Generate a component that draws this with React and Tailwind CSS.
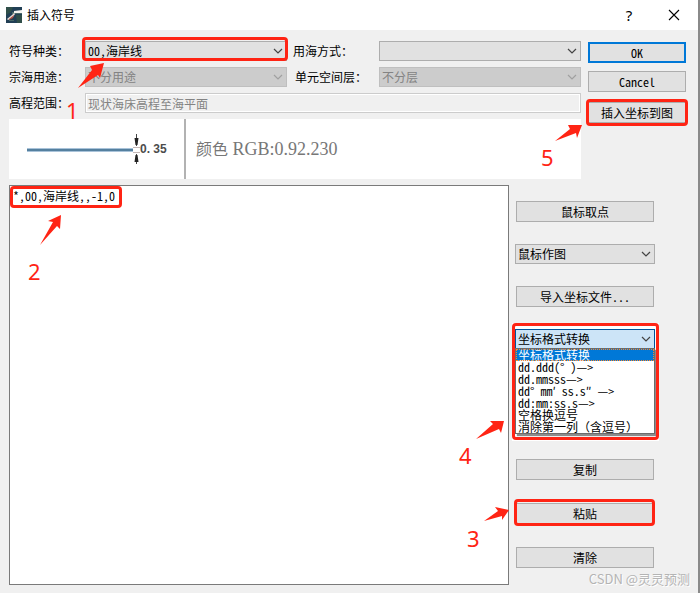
import { useState } from 'react'
import clsx from 'clsx'

const FORMATS = ['坐标格式转换','dd.ddd(° )—>','dd.mmsss—>','dd° mm′ ss.s″ —>','dd:mm:ss.s—>','空格换逗号','消除第一列（含逗号）']

// outline: tip, barb, notch, tail, notch, barb
const ARROWS = [
  '104,63 90,66 92,70 78,88 98,75 100,78',
  '61,215 48,221 53,222 40,245 57,226 60,229',
  '509,510 495,507 498,511 484,521 502,516 502,520',
  '504,421 490,421 493,424 476,439 499,429 501,433',
  '582,125 568,125 570,129 555,141 576,133 577,138',
]

function Chevron({ className }) {
  return (
    <svg className={clsx('absolute right-1 top-1.5 pointer-events-none',className)} width="10" height="8" viewBox="0 0 10 8" fill="none" stroke="currentColor" strokeWidth="1.2">
      <path d="M1 2l4 4 4-4"/>
    </svg>
  )
}

function Select({ id, label, value, options, disabled, open, onClick }) {
  return (
    <div className="relative">
      <select id={id} aria-label={label} defaultValue={value} disabled={disabled} onMouseDown={onClick}
        className={clsx('block w-full h-5 pl-0.5 pr-4 appearance-none border rounded-none opacity-100 focus:outline-none',
          disabled ? 'bg-[#cccccc] border-[#bfbfbf] text-[#838383]' : open ? 'bg-[#cce4f7] border-[#005499]' : 'bg-[#e1e1e1] border-[#adadad]')}>
        {options.map(o=><option key={o}>{o}</option>)}
      </select>
      <Chevron className={disabled ? 'text-[#a0a0a0]' : 'text-[#444444]'}/>
    </div>
  )
}

function Button({ primary, className, children, ...rest }) {
  return (
    <button type="button" {...rest}
      className={clsx('block w-full h-[21px] bg-[#e1e1e1] text-center',primary ? 'border-2 border-[#0078d7]' : 'border border-[#adadad]',className)}>
      {children}
    </button>
  )
}

function Mark({ className }) {
  return <div className={clsx('absolute border-3 border-[#ff2414] rounded-sm pointer-events-none',className)}/>
}

function Num({ className, children }) {
  return <span className={clsx('absolute text-[22px] leading-5 text-[#ff2414] pointer-events-none font-["Noto_Sans",sans-serif]',className)}>{children}</span>
}

function TitleBar() {
  return (
    <header className="h-[30px] bg-white flex items-center pl-1.5 pr-[18px]">
      <svg width="16" height="16" viewBox="0 0 16 16" className="mr-[5px]">
        <path fill="#213f55" d="M0 0h16v16H0z"/>
        <path fill="#304f49" d="M0 0h7l-2 5-5 3zM10 8h6v8h-5z"/>
        <path fill="#4a6968" d="M6 5h10v2H6zM3 13h5v1H3z"/>
        <path fill="#f4f3f0" d="M8 4l8-1v3H8z"/>
        <path fill="#e9ded8" d="M1 12l5-4 2-2 1 1-2 3-5 3z"/>
        <path fill="#ae5146" d="M3 12l5-4-1 3-4 2z"/>
      </svg>
      <h1 className="flex-1">插入符号</h1>
      <button type="button" aria-label="Help" className="w-3 mr-[33px] text-[15px] leading-4 font-['Noto_Sans',sans-serif]">?</button>
      <button type="button" aria-label="Close">
        <svg width="12" height="12" viewBox="0 0 12 12" stroke="#000" strokeWidth="1.1"><path d="M1 1l10 10M11 1L1 11"/></svg>
      </button>
    </header>
  )
}

function Preview() {
  return (
    <div className="h-[60px] mt-1.5 bg-white flex items-center">
      <svg width="131" height="60" viewBox="0 0 131 60">
        <path stroke="#a9c3d9" strokeWidth="4" d="M18 31h106"/>
        <path stroke="#55809f" strokeWidth="2" d="M18 31h106"/>
        <path stroke="#c4b8b8" d="M124 28.500h7M124 33.500h7"/>
        <path stroke="#444" d="M127.500 15v12M127.500 35v10"/>
        <path fill="#222" d="M125.500 19h4l-1 7h-2zM125.500 43h4l-1-7h-2z"/>
      </svg>
      <span className="w-11 text-xs font-bold text-[#4c4c4c] font-['Liberation_Sans',sans-serif]">0. 35</span>
      <div className="w-0.5 h-full bg-[#b2b2b2]"/>
      <span className="ml-2.5 text-lg text-[#777777] font-['Liberation_Serif','Noto_Sans_CJK_SC',serif]">
        <span className="text-base">颜色</span> RGB:0.92.230
      </span>
    </div>
  )
}

export default function App() {
  const [coords,setCoords]=useState('*,00,海岸线,,-1,0')
  const [open,setOpen]=useState(true)
  const [format,setFormat]=useState(FORMATS[0])
  return (
    <main className="relative min-h-screen flex flex-col bg-[#f0f0f0] border-r-2 border-[#8a8a8a] text-black text-xs font-['Noto_Sans_Mono_CJK_SC','Noto_Sans_CJK_SC',sans-serif]">
      <TitleBar/>
      <div className="flex gap-[7px] pl-[9px] pr-3 pt-[11px]">
        <div className="flex-1">
          <div className="grid grid-cols-[76px_1fr_92px_1fr] gap-y-1.5 items-center">
            <label htmlFor="kind">符号种类：</label>
            <div className="relative">
              <Select id="kind" value="00,海岸线" options={['00,海岸线']}/>
              <Mark className="-left-[3px] -right-px -top-1 bottom-0"/>
            </div>
            <label htmlFor="sea" className="pl-1.5">用海方式：</label>
            <Select id="sea" options={['']}/>
            <label htmlFor="use">宗海用途：</label>
            <Select id="use" value="不分用途" options={['不分用途']} disabled/>
            <label htmlFor="layer" className="pl-2">单元空间层：</label>
            <Select id="layer" value="不分层" options={['不分层']} disabled/>
            <label htmlFor="range">高程范围：</label>
            <input id="range" readOnly value="现状海床高程至海平面"
              className="col-span-3 h-5 px-0.5 border border-[#cccccc] bg-[#f0f0f0] text-[#838383] shadow-[inset_0_0_0_1px_white] focus:outline-none"/>
          </div>
          <Preview/>
        </div>
        <div className="w-[98px] pt-px">
          <Button primary>OK</Button>
          <Button className="mt-2">Cancel</Button>
          <div className="relative mt-2.5">
            <Button>插入坐标到图</Button>
            <Mark className="-inset-x-0.5 -inset-y-[3px]"/>
          </div>
        </div>
      </div>
      <div className="flex-1 flex gap-1.5 pt-1.5 pl-[9px] pr-[43px] pb-2">
        <div className="relative flex-1 flex">
          <textarea aria-label="坐标" value={coords} onChange={e=>setCoords(e.target.value)}
            className="flex-1 px-[3px] py-0.5 border border-[#7a7a7a] bg-white resize-none leading-4 focus:outline-none"/>
          <Mark className="left-px top-px w-28 h-[22px]"/>
        </div>
        <div className="w-[140px] pt-4">
          <div className="flex flex-col gap-[22px]">
            <div className="px-px"><Button>鼠标取点</Button></div>
            <Select label="鼠标作图" value="鼠标作图" options={['鼠标作图']}/>
            <div className="px-px"><Button>导入坐标文件...</Button></div>
            <div className="relative h-27">
              <div className="absolute -left-[3px] -right-1 -top-1.5 -bottom-1 bg-white"/>
              <Select key={format} label="坐标格式转换" value={format} options={FORMATS} open={open} onClick={e=>{e.preventDefault();setOpen(!open)}}/>
              {open && (
                <ul role="listbox" className="absolute inset-x-0 top-[19px] border border-[#6c6c6c] bg-white leading-3 shadow-[2px_2px_1px_#8c8c8c]">
                  {FORMATS.map(f=>(
                    <li key={f} role="option" aria-selected={f===format} onClick={()=>{setFormat(f);setOpen(false)}}
                      className={clsx('h-3 pl-0.5 whitespace-pre',f===format && 'bg-[#0078d7] text-white outline-1 -outline-offset-1 outline-dotted outline-[#ff8728]')}>
                      {f}
                    </li>
                  ))}
                </ul>
              )}
              <Mark className="-left-[3px] -right-1 -top-1.5 -bottom-[3px]"/>
            </div>
          </div>
          <div className="flex flex-col gap-[23px] px-px mt-[22px]">
            <Button>复制</Button>
            <div className="relative">
              <Button>粘贴</Button>
              <Mark className="-left-0.5 -right-px -top-1 -bottom-0.5"/>
            </div>
            <Button onClick={()=>setCoords('')}>清除</Button>
          </div>
        </div>
      </div>

      {/* numbered steps over the dialog */}
      <svg className="absolute left-0 top-0 pointer-events-none" width="700" height="593" viewBox="0 0 700 593" fill="#ff2414">
        {ARROWS.map(p=><polygon key={p} points={p}/>)}
      </svg>
      <Num className="left-[66px] top-[100px]">1</Num>
      <Num className="left-[28px] top-[261px]">2</Num>
      <Num className="left-[467px] top-[528px]">3</Num>
      <Num className="left-[459px] top-[445px]">4</Num>
      <Num className="left-[541px] top-[147px]">5</Num>
      <span className="absolute right-2 bottom-1 text-[13px] leading-5 text-[#b4b4b4] pointer-events-none text-shadow-[1px_1px_0_white] font-['Noto_Sans_CJK_SC',sans-serif]">CSDN @灵灵预测</span>
    </main>
  )
}
